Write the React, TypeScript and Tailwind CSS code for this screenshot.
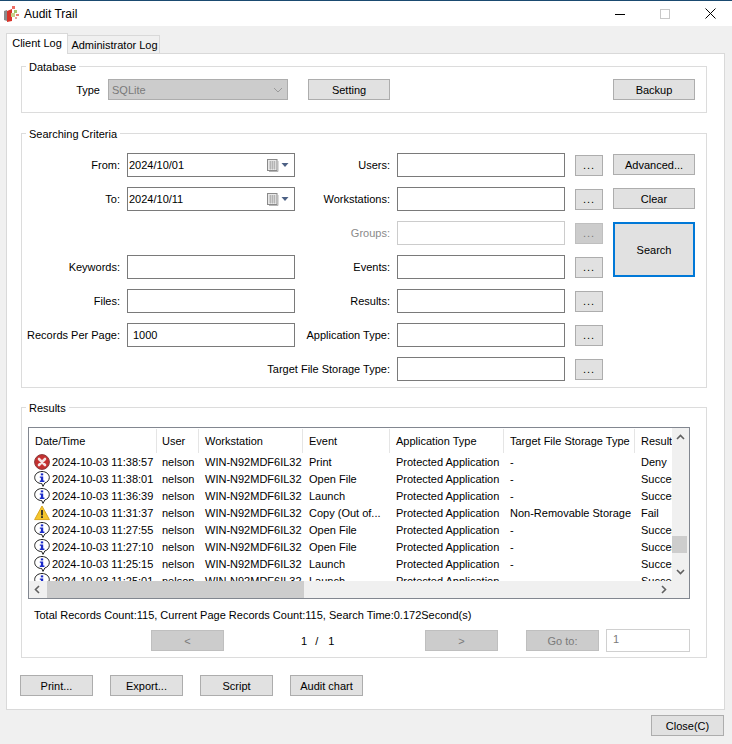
import type { ReactNode } from "react"

function Btn({ children, className = "" }: { children: ReactNode; className?: string }) {
  return (
    <button className={`flex h-[21px] items-center justify-center border border-[#adadad] bg-[#e1e1e1] text-[#000] ${className}`}>
      {children}
    </button>
  )
}

function DisabledBtn({ children, className = "" }: { children: ReactNode; className?: string }) {
  return (
    <button className={`flex h-[21px] items-center justify-center border border-[#bfbfbf] bg-[#cccccc] text-[#7a7a7a] ${className}`}>
      {children}
    </button>
  )
}

function Group({ title, className = "", children }: { title: string; className?: string; children: ReactNode }) {
  return (
    <div className={`relative border-[1.5px] border-[#dcdcdc] ${className}`}>
      <span className="absolute top-[-8px] left-[4px] bg-white px-[3px] leading-[16px]">{title}</span>
      {children}
    </div>
  )
}

function Field({ children, disabled = false }: { children?: ReactNode; disabled?: boolean }) {
  return (
    <div className={`flex h-[24px] w-[168px] items-center border bg-white ${disabled ? "border-[#cccccc]" : "border-[#7a7a7a]"}`}>
      {children}
    </div>
  )
}

function Label({ children, disabled = false, width }: { children: ReactNode; disabled?: boolean; width: string }) {
  return <span className={`${width} whitespace-nowrap pr-[7px] text-right ${disabled ? "text-[#8a8a8a]" : ""}`}>{children}</span>
}

function CalendarIcon() {
  return (
    <svg width="22" height="13" viewBox="0 0 22 13" className="mr-[5px] ml-auto">
      <rect x="0.5" y="0.5" width="9.5" height="11" fill="#e8e8e8" stroke="#8a8a8a" />
      <path d="M2 3h6.500M2 5h6.500M2 7h6.500M2 9h6.500M3.500 2v8.500M5.500 2v8.500M7.500 2v8.500" stroke="#a8a8a8" strokeWidth="0.7" />
      <path d="M11 2v10.500H2" stroke="#b5b5b5" fill="none" />
      <path d="M14.500 4h7l-3.500 4z" fill="#4d6185" />
    </svg>
  )
}

function ErrorIcon() {
  return (
    <svg width="16" height="16" viewBox="0 0 16 16">
      <circle cx="8" cy="8" r="7.4" fill="#c4302f" stroke="#8c3a3a" />
      <path d="M5 5l6 6M11 5l-6 6" stroke="#f4e4e4" strokeWidth="2.6" strokeLinecap="round" />
    </svg>
  )
}

function InfoIcon() {
  return (
    <svg width="16" height="16" viewBox="0 0 16 16">
      <path d="M8 .5c4 0 7.300 2.600 7.300 6 0 2.600-1.800 4.700-4.500 5.500L9 15.400 7.800 12.600C3.800 12.500.7 9.900.7 6.500S4 .5 8 .5z" fill="#fff" stroke="#222" strokeWidth="1" />
      <rect x="6.800" y="2.400" width="2.400" height="2" fill="#1b2bc9" />
      <path d="M5.800 5.400h3.400v4.200h1.200v1.400H5.800V9.600h1.100V6.800H5.800z" fill="#1b2bc9" />
    </svg>
  )
}

function WarnIcon() {
  return (
    <svg width="16" height="16" viewBox="0 0 16 16">
      <path d="M8 1L15.400 14.600H.6z" fill="#f5c62d" stroke="#d9a520" strokeLinejoin="round" />
      <rect x="7.100" y="5" width="1.800" height="5.400" fill="#2a2a2a" />
      <rect x="7.100" y="11.200" width="1.800" height="1.800" fill="#2a2a2a" />
    </svg>
  )
}

function AppIcon() {
  return (
    <svg width="16" height="18" viewBox="0 0 16 18">
      <path d="M0 6l3-1v11l-3-1z" fill="#8a8a8a" />
      <path d="M3 6l5-2v12l-5 1z" fill="#d8342a" />
      <rect x="7" y="8" width="4" height="4" fill="#c8cf8a" />
      <rect x="10" y="5" width="3" height="3" fill="#a6c46a" />
      <rect x="12" y="9" width="3" height="2" fill="#e87a70" />
      <rect x="8" y="1" width="3" height="3" fill="#ef6d63" />
      <rect x="11" y="12" width="2" height="2" fill="#e8a09a" />
    </svg>
  )
}

const columns = [
  { name: "Date/Time", width: "w-[128px]", pad: "pl-[6px]" },
  { name: "User", width: "w-[42px]", pad: "pl-[5px]" },
  { name: "Workstation", width: "w-[104px]", pad: "pl-[6px]" },
  { name: "Event", width: "w-[87px]", pad: "pl-[6px]" },
  { name: "Application Type", width: "w-[114px]", pad: "pl-[6px]" },
  { name: "Target File Storage Type", width: "w-[131px]", pad: "pl-[6px]" },
  { name: "Result", width: "w-[37px]", pad: "pl-[6px]" },
]

const rows = [
  { icon: <ErrorIcon />, time: "2024-10-03 11:38:57", event: "Print", target: "-", result: "Deny" },
  { icon: <InfoIcon />, time: "2024-10-03 11:38:01", event: "Open File", target: "-", result: "Success" },
  { icon: <InfoIcon />, time: "2024-10-03 11:36:39", event: "Launch", target: "-", result: "Success" },
  { icon: <WarnIcon />, time: "2024-10-03 11:31:37", event: "Copy (Out of...", target: "Non-Removable Storage", result: "Fail" },
  { icon: <InfoIcon />, time: "2024-10-03 11:27:55", event: "Open File", target: "-", result: "Success" },
  { icon: <InfoIcon />, time: "2024-10-03 11:27:10", event: "Open File", target: "-", result: "Success" },
  { icon: <InfoIcon />, time: "2024-10-03 11:25:15", event: "Launch", target: "-", result: "Success" },
  { icon: <InfoIcon />, time: "2024-10-03 11:25:01", event: "Launch", target: "-", result: "Success" },
]

function Chevron({ d, className = "" }: { d: string; className?: string }) {
  return (
    <svg width="9" height="9" viewBox="0 0 9 9" className={className}>
      <path d={d} fill="none" stroke="#606060" strokeWidth="1.6" />
    </svg>
  )
}

function ResultsTable() {
  return (
    <div className="flex h-[172px] w-[662px] flex-col border border-[#828790] bg-white">
      <div className="flex h-[153px]">
        <div className="w-[643px] overflow-hidden">
          <div className="flex h-[25px] pt-px">
            {columns.map((c) => (
              <div key={c.name} className={`flex h-[24px] shrink-0 items-center overflow-hidden whitespace-nowrap border-r border-[#e5e5e5] last:border-r-0 ${c.width} ${c.pad}`}>
                {c.name}
              </div>
            ))}
          </div>
          {rows.map((r) => (
            <div key={r.time} className="flex h-[17px] items-center whitespace-nowrap">
              <div className="flex w-[128px] shrink-0 items-center gap-[2px] pl-[5px]">
                <span className="shrink-0">{r.icon}</span>
                <span>{r.time}</span>
              </div>
              <div className="w-[42px] shrink-0 pl-[5px]">nelson</div>
              <div className="w-[104px] shrink-0 overflow-hidden pl-[6px]">WIN-N92MDF6IL32</div>
              <div className="w-[87px] shrink-0 pl-[6px]">{r.event}</div>
              <div className="w-[114px] shrink-0 pl-[6px]">Protected Application</div>
              <div className="w-[131px] shrink-0 pl-[6px]">{r.target}</div>
              <div className="w-[37px] shrink-0 overflow-hidden pl-[6px]">{r.result}</div>
            </div>
          ))}
        </div>
        <div className="flex w-[17px] flex-col items-center justify-between bg-[#f0f0f0] py-[5px]">
          <Chevron d="M1 6l3.500-3.500L8 6" />
          <div className="mt-[93px] mb-[13px] h-[17px] w-[15px] self-start bg-[#cdcdcd]" />
          <Chevron d="M1 3l3.500 3.500L8 3" />
        </div>
      </div>
      <div className="flex h-[17px] items-center bg-[#f0f0f0]">
        <Chevron d="M6 1L2.500 4.500 6 8" className="ml-[4px]" />
        <div className="ml-[5px] h-full w-[257px] bg-[#cdcdcd]" />
        <Chevron d="M3 1l3.500 3.500L3 8" className="mr-[21px] ml-auto" />
      </div>
    </div>
  )
}

export default function App() {
  return (
    <div className="flex h-[744px] w-[732px] flex-col overflow-hidden bg-[#f0f0f0] font-['Liberation_Sans',Arial,sans-serif] text-[11px] leading-[16px] text-[#000]">
      <div className="h-px bg-[#1a4a70]" />
      <div className="flex h-[25px] items-center bg-white">
        <span className="ml-[4px]"><AppIcon /></span>
        <span className="ml-[4px] text-[12px]">Audit Trail</span>
        <div className="ml-auto flex items-center">
          <svg width="10" height="10" viewBox="0 0 10 10" className="mr-[35px]"><path d="M0 5.500h10" stroke="#000" /></svg>
          <svg width="10" height="10" viewBox="0 0 10 10" className="mr-[35px]"><rect x="0.500" y="0.500" width="9" height="9" fill="none" stroke="#c8c8c8" /></svg>
          <svg width="11" height="11" viewBox="0 0 11 11" className="mr-[16px]"><path d="M.500.500l10 10M10.500.500l-10 10" stroke="#000" /></svg>
        </div>
      </div>

      {/* tabs */}
      <div className="mt-[7px] flex h-[20px] items-end pl-[6px]">
        <div className="z-10 -mb-px flex h-[21px] w-[62px] items-center justify-center border border-b-0 border-[#d9d9d9] bg-white pb-[2px]">Client Log</div>
        <div className="flex h-[18px] w-[92px] items-center justify-center border border-b-0 border-l-0 border-[#d9d9d9] bg-[#f0f0f0] pl-[2px]">Administrator Log</div>
      </div>

      <div className="ml-[6px] flex h-[657px] w-[719px] flex-col border border-[#d9d9d9] bg-white px-[14px] pt-[12px]">
        <Group title="Database" className="h-[47px] w-[686px]">
          <div className="flex h-full items-start pt-[12px]">
            <span className="w-[84px] pt-[3px] pr-[6px] text-right">Type</span>
            <div className="ml-[2px] flex h-[21px] w-[180px] items-center justify-between border border-[#adadad] bg-[#cccccc] pr-[4px] pl-[3px] text-[#7a7a7a]">
              SQLite
              <svg width="10" height="6" viewBox="0 0 10 6"><path d="M1 1l4 4 4-4" fill="none" stroke="#9a9a9a" /></svg>
            </div>
            <Btn className="ml-[20px] w-[82px]">Setting</Btn>
            <Btn className="mr-[11px] ml-auto w-[82px]">Backup</Btn>
          </div>
        </Group>

        <Group title="Searching Criteria" className="mt-[20px] h-[255px] w-[686px]">
          <div className="flex pt-[19px]">
            <div className="flex flex-col gap-[10px]">
              <div className="flex h-[24px] items-center"><Label width="w-[105px]">From:</Label><Field><span className="pl-[1px]">2024/10/01</span><CalendarIcon /></Field></div>
              <div className="flex h-[24px] items-center"><Label width="w-[105px]">To:</Label><Field><span className="pl-[1px]">2024/10/11</span><CalendarIcon /></Field></div>
              <div className="h-[24px]" />
              <div className="flex h-[24px] items-center"><Label width="w-[105px]">Keywords:</Label><Field /></div>
              <div className="flex h-[24px] items-center"><Label width="w-[105px]">Files:</Label><Field /></div>
              <div className="flex h-[24px] items-center"><Label width="w-[105px]">Records Per Page:</Label><Field><span className="pl-[5px]">1000</span></Field></div>
            </div>
            <div className="flex flex-col gap-[10px]">
              {["Users:", "Workstations:", "Groups:", "Events:", "Results:", "Application Type:", "Target File Storage Type:"].map((name) => (
                <div key={name} className="flex h-[24px] items-center">
                  <Label width="w-[102px] flex justify-end" disabled={name === "Groups:"}>{name}</Label>
                  <Field disabled={name === "Groups:"} />
                  {name === "Groups:" ? (
                    <DisabledBtn className="ml-[10px] w-[28px] tracking-[1px]">...</DisabledBtn>
                  ) : (
                    <Btn className="ml-[10px] w-[28px] tracking-[1px]">...</Btn>
                  )}
                </div>
              ))}
            </div>
            <div className="ml-[10px] flex w-[82px] flex-col">
              <Btn className="mt-px w-[82px]">Advanced...</Btn>
              <Btn className="mt-[13px] w-[82px]">Clear</Btn>
              <button className="mt-[13px] h-[55px] w-[82px] border-2 border-[#0078d7] bg-[#e1e1e1]">Search</button>
            </div>
          </div>
        </Group>

        <Group title="Results" className="mt-[19px] h-[251px] w-[686px]">
          <div className="pt-[19px] pl-[6px]"><ResultsTable /></div>
          <div className="mt-[8px] pl-[12px]">Total Records Count:115, Current Page Records Count:115, Search Time:0.172Second(s)</div>
          <div className="mt-[6px] flex items-center">
            <DisabledBtn className="ml-[129px] w-[73px]">&lt;</DisabledBtn>
            <span className="ml-[77px] flex w-[41px] gap-[8px]"><span>1</span><span>/</span><span className="ml-[2px]">1</span></span>
            <DisabledBtn className="ml-[83px] w-[73px]">&gt;</DisabledBtn>
            <DisabledBtn className="ml-[28px] w-[73px]">Go to:</DisabledBtn>
            <div className="ml-[7px] h-[23px] w-[84px] border border-[#d0d0d0] pt-px pl-[6px] text-[#7a7a7a]">1</div>
          </div>
        </Group>

        <div className="mt-[17px] flex gap-[17px]">
          <Btn className="-ml-px w-[73px]">Print...</Btn>
          <Btn className="w-[73px]">Export...</Btn>
          <Btn className="w-[73px]">Script</Btn>
          <Btn className="w-[73px]">Audit chart</Btn>
        </div>
      </div>

      <div className="mt-[5px] flex justify-end pr-[8px]">
        <Btn className="w-[73px]">Close(C)</Btn>
      </div>
    </div>
  )
}
